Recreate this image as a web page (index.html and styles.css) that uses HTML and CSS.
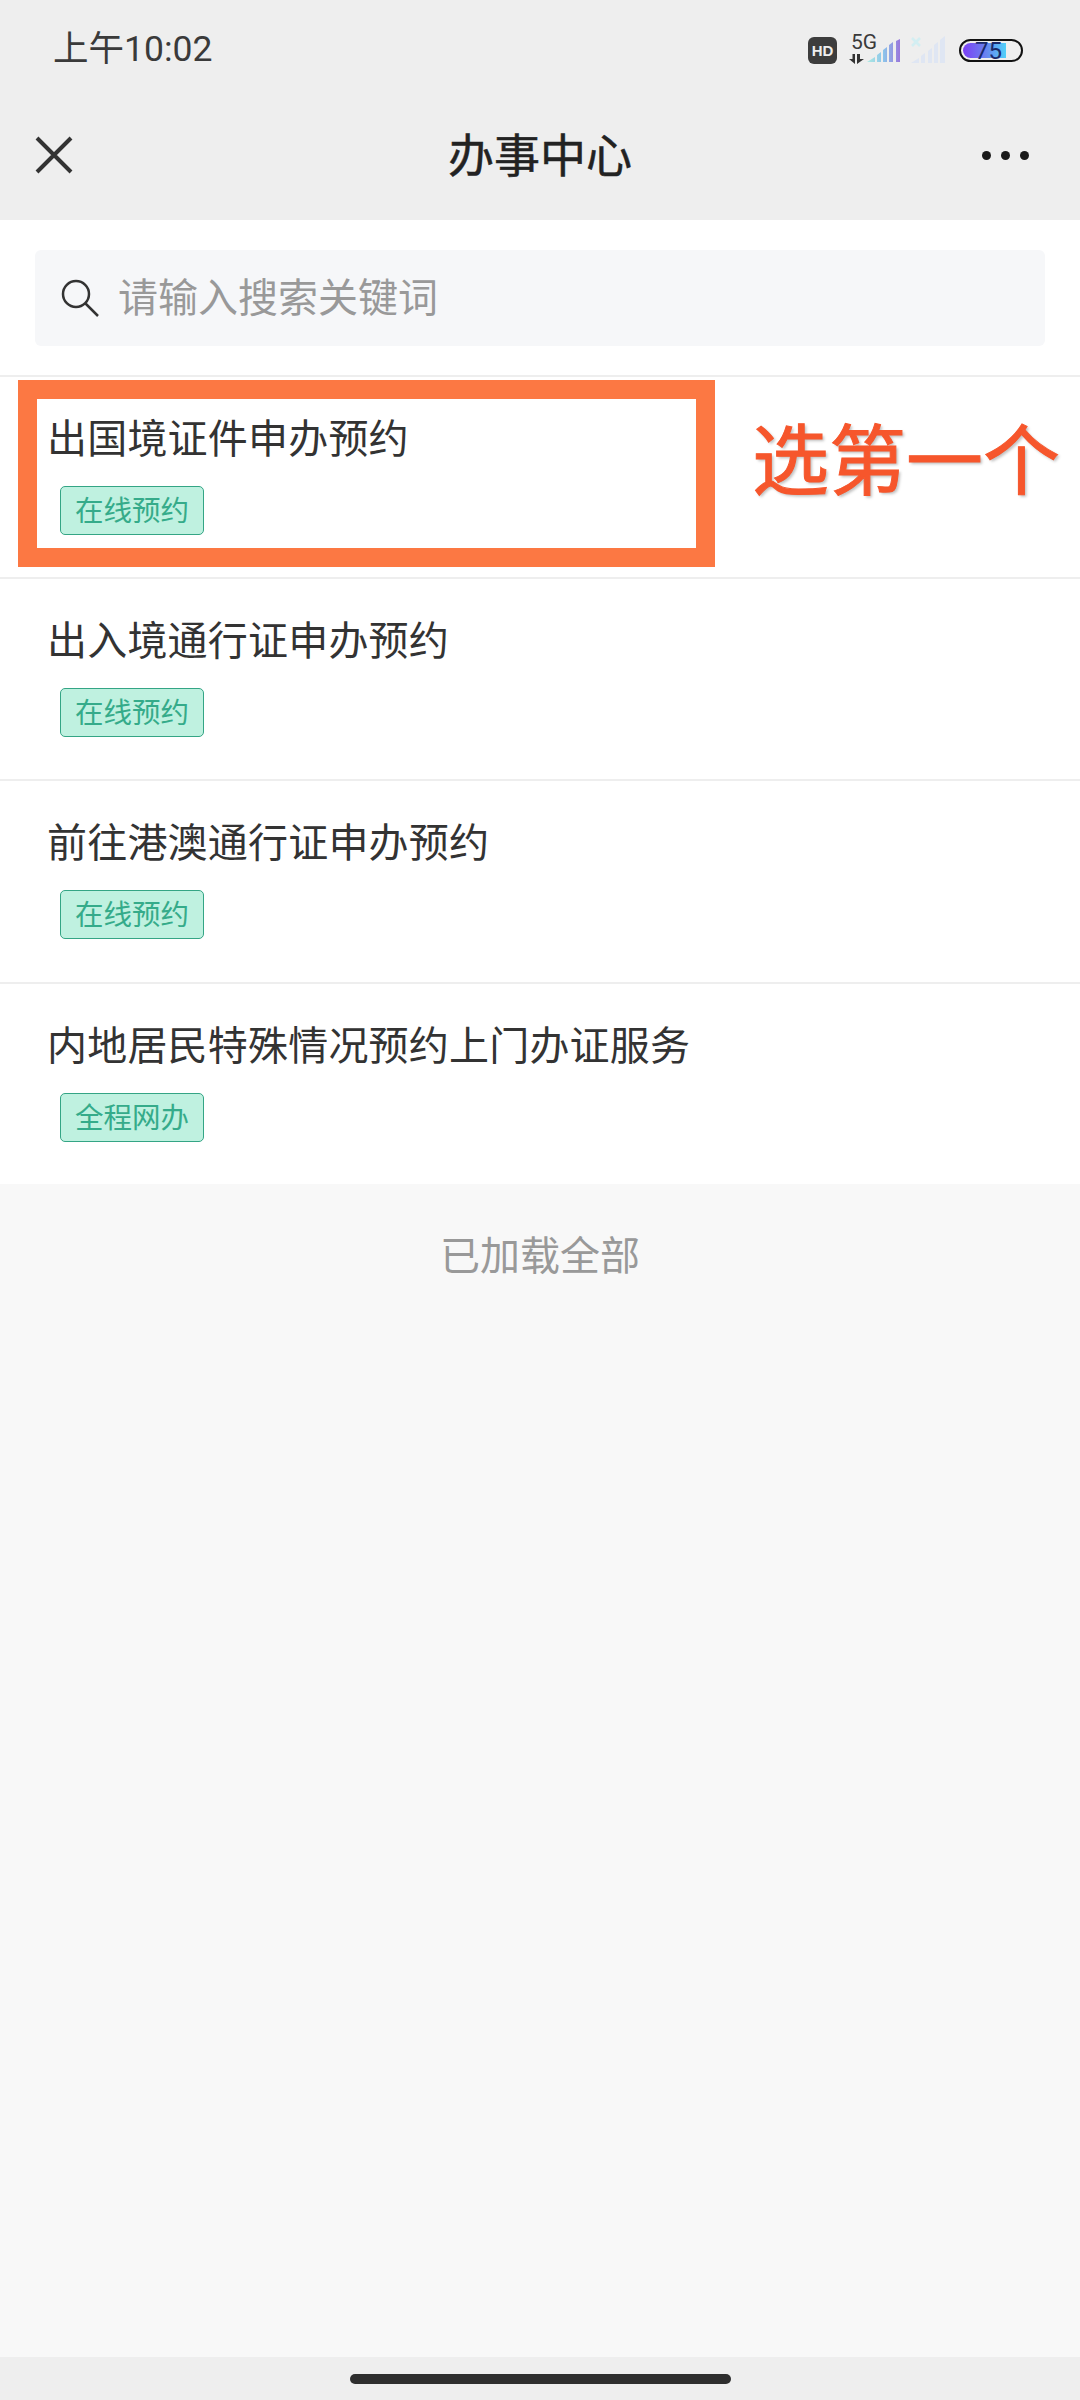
FILE: index.html
```html
<!DOCTYPE html>
<html lang="zh-CN">

<head>
    <meta charset="UTF-8">
    <meta name="viewport" content="width=device-width, initial-scale=1.0">
    <title>办事中心</title>
    <link rel="stylesheet" href="styles.css">
</head>

<body>
    <div class="top">
        <div class="status">
            <span class="time">上午10:02</span>
            <div class="status-icons">
                <span class="hd">HD</span>
                <div class="net">
                    <span class="net-label">5G</span>
                    <svg class="net-arrows" width="15" height="10" viewBox="0 0 15 10">
                        <path d="M6 0V10L0 5H3.5V0ZM8 0H11V5H15L8 10Z" fill="#333" />
                    </svg>
                </div>
                <svg class="signal" width="33" height="24" viewBox="0 0 33 24">
                    <defs>
                        <linearGradient id="sig1" x1="0" x2="1" y1="0" y2="0">
                            <stop offset="0" stop-color="#aeeae2" />
                            <stop offset="0.5" stop-color="#8cc4ea" />
                            <stop offset="1" stop-color="#9a78dc" />
                        </linearGradient>
                    </defs>
                    <path d="M0 23 8 18V23ZM10 16 14 13V23H10ZM16 11 20 8V23H16ZM22 6 26 3V23H22ZM29 2 33 0V23H29Z" fill="url(#sig1)" />
                </svg>
                <svg class="signal-off" width="34" height="28" viewBox="0 0 34 28">
                    <path d="M0 27 8 22V27ZM10 20 14 17V27H10ZM17 15 21 12V27H17ZM23 9 27 6V27H23ZM29 4 34 0V27H29Z" fill="#dfe6f3" />
                    <path d="M1 2 9 10M9 2 1 10" stroke="#d3eef2" stroke-width="2.5" />
                </svg>
                <div class="battery">
                    <div class="battery-fill"></div>
                    <span class="battery-num">75</span>
                </div>
            </div>
        </div>
        <div class="nav">
            <svg class="nav-close" width="38" height="38" viewBox="0 0 38 38">
                <path d="M2 2 36 36M36 2 2 36" stroke="#333" stroke-width="4" fill="none" />
            </svg>
            <span class="nav-title">办事中心</span>
            <div class="nav-more"><i></i><i></i><i></i></div>
        </div>
    </div>

    <div class="search-wrap">
        <div class="search">
            <svg width="38" height="38" viewBox="0 0 38 38">
                <circle cx="15" cy="15" r="13" stroke="#333" stroke-width="2.5" fill="none" />
                <path d="M24 24 37 37" stroke="#333" stroke-width="2.5" fill="none" />
            </svg>
            <span>请输入搜索关键词</span>
        </div>
    </div>

    <ul class="list">
        <li class="row">
            <div class="row-title">出国境证件申办预约</div>
            <span class="tag">在线预约</span>
            <div class="mark-box"></div>
            <div class="mark-text">选第一个</div>
        </li>
        <li class="row">
            <div class="row-title">出入境通行证申办预约</div>
            <span class="tag">在线预约</span>
        </li>
        <li class="row">
            <div class="row-title">前往港澳通行证申办预约</div>
            <span class="tag">在线预约</span>
        </li>
        <li class="row">
            <div class="row-title">内地居民特殊情况预约上门办证服务</div>
            <span class="tag">全程网办</span>
        </li>
    </ul>

    <div class="end">已加载全部</div>

    <div class="bottom"><div class="home-bar"></div></div>
</body>

</html>
```

FILE: styles.css
```css
* {
    box-sizing: border-box;
}

html,
body {
    height: 100%;
}

body {
    margin: 0;
    height: 2400px;
    display: flex;
    flex-direction: column;
    background-color: #f8f8f8;
    font-family: "Noto Sans CJK SC", "Noto Sans", sans-serif;
    color: #333;
}

.top {
    background-color: #eeeeee;
    height: 220px;
}

.status {
    height: 100px;
    padding: 0 57px 0 53px;
    display: flex;
    justify-content: space-between;
    align-items: center;
}

.time {
    font-family: Roboto, "Noto Sans CJK SC", sans-serif;
    font-size: 35.5px;
    line-height: 1;
    color: #3a3a3a;
}

.status-icons {
    display: flex;
    align-items: center;
}

.hd {
    width: 29px;
    height: 27px;
    border-radius: 6px;
    background-color: #3d3d3d;
    color: #eee;
    font-family: "Liberation Sans", sans-serif;
    font-size: 15px;
    font-weight: 700;
    line-height: 27px;
    text-align: center;
}

.net {
    width: 28px;
    margin-left: 12px;
    display: flex;
    flex-direction: column;
    margin-top: -3px;
}

.net-label {
    font-family: Roboto, sans-serif;
    font-size: 21px;
    line-height: 18px;
    color: #3a3a3a;
    padding-left: 2px;
}

.net-arrows {
    margin-top: 3px;
}

.signal {
    margin-left: -10px;
    margin-top: 1px;
}

.signal-off {
    margin-left: 11px;
    margin-top: -1px;
}

.battery {
    position: relative;
    width: 64px;
    height: 23px;
    margin-left: 14px;
    border: 2px solid #111;
    border-radius: 12px;
    padding: 2px;
}

.battery-fill {
    width: 43px;
    height: 15px;
    border-radius: 8px 0 0 8px;
    background: linear-gradient(90deg, #7c3ff5, #6a7ff0 50%, #50d0f8);
}

.battery-num {
    position: absolute;
    left: 14px;
    top: -4px;
    font-family: Roboto, sans-serif;
    font-size: 24px;
    line-height: 28px;
    color: #1a2a6a;
}

.nav {
    height: 120px;
    padding: 0 51px 10px 35px;
    display: flex;
    justify-content: space-between;
    align-items: center;
    position: relative;
}

.nav-title {
    position: absolute;
    left: 0;
    right: 0;
    top: 23px;
    text-align: center;
    font-size: 46px;
    line-height: 58px;
    color: #222;
    -webkit-text-stroke: 0.5px #222;
}

.nav-more {
    display: flex;
    gap: 10px;
}

.nav-more i {
    width: 9px;
    height: 9px;
    border-radius: 50%;
    background-color: #1a1a1a;
}

.search-wrap {
    background-color: #fff;
    height: 155px;
    padding: 30px 35px 0;
}

.search {
    height: 96px;
    border-radius: 6px;
    background-color: #f6f7f9;
    padding-left: 26px;
    display: flex;
    align-items: center;
    gap: 19px;
}

.search span {
    font-size: 40px;
    line-height: 56px;
    padding-bottom: 6px;
    color: #999;
}

.list {
    list-style: none;
    margin: 0;
    padding: 0;
    background-color: #fff;
}

.row {
    position: relative;
    height: 202.2px;
    border-top: 2px solid #eeeeee;
    padding: 31px 0 0 47px;
}

.row-title {
    font-size: 40px;
    line-height: 56px;
    letter-spacing: 0.2px;
    color: #333;
}

.tag {
    display: inline-block;
    width: 144px;
    height: 49px;
    margin-top: 22px;
    margin-left: 13px;
    border: 1px solid #34a585;
    border-radius: 5px;
    background-color: #bff1e0;
    color: #35ab8a;
    font-size: 28.5px;
    line-height: 43px;
    text-align: center;
}

.mark-box {
    position: absolute;
    left: 18px;
    top: 3px;
    width: 697px;
    height: 187px;
    border: 19px solid #fc7843;
}

.mark-text {
    position: absolute;
    left: 752px;
    top: 29px;
    font-size: 77px;
    line-height: 100px;
    white-space: nowrap;
    color: #f6562c;
    -webkit-text-stroke: 1px #f6562c;
    text-shadow: 2px 2px 3px rgba(0, 0, 0, 0.25);
}

.end {
    margin-top: 41px;
    text-align: center;
    font-size: 40px;
    line-height: 56px;
    color: #999;
}

.bottom {
    margin-top: auto;
    height: 43px;
    background-color: #eeeeee;
    padding-top: 17px;
}

.home-bar {
    width: 381px;
    height: 10px;
    margin: 0 auto;
    border-radius: 5px;
    background-color: #2e2e2e;
}
```
